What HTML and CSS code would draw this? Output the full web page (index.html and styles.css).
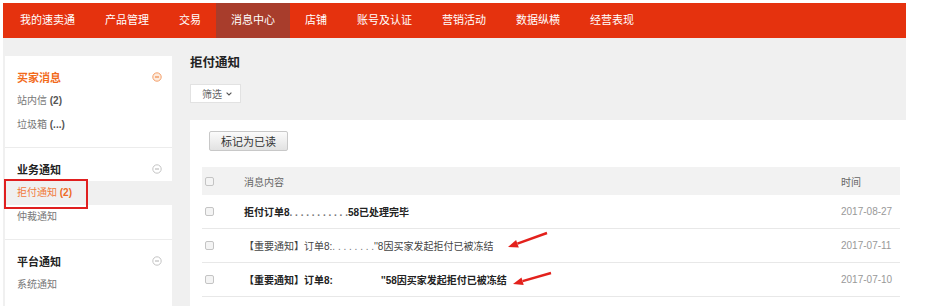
FILE: index.html
```html
<!DOCTYPE html>
<html lang="zh-CN">
<head>
  <meta charset="UTF-8">
  <title>拒付通知 - 消息中心</title>
  <link rel="stylesheet" href="styles.css">
</head>
<body>

<div class="app">
  <!-- top navigation -->
  <div class="topnav">
    <a href="#">我的速卖通</a>
    <a href="#">产品管理</a>
    <a href="#">交易</a>
    <a href="#" class="active">消息中心</a>
    <a href="#">店铺</a>
    <a href="#">账号及认证</a>
    <a href="#">营销活动</a>
    <a href="#">数据纵横</a>
    <a href="#">经营表现</a>
  </div>

  <div class="main">
    <!-- left menu -->
    <div class="sidebar">
      <div class="side-section">
        <div class="side-title orange">
          <span>买家消息</span>
          <svg class="fold-icon" width="10" height="10" viewBox="0 0 10 10"><circle cx="5" cy="5" r="4.2" fill="#fdebdd" stroke="#f3a06b"/><path d="M3 5h4" stroke="#f08a4a" stroke-width="1.2"/></svg>
        </div>
        <div class="side-item">站内信 <b>(2)</b></div>
        <div class="side-item">垃圾箱 <b>(...)</b></div>
      </div>
      <div class="side-section">
        <div class="side-title">
          <span>业务通知</span>
          <svg class="fold-icon" width="10" height="10" viewBox="0 0 10 10"><circle cx="5" cy="5" r="4.2" fill="#fff" stroke="#c4c4c4"/><path d="M3 5h4" stroke="#b0b0b0"/></svg>
        </div>
        <div class="side-item active">拒付通知 <b>(2)</b><span class="mark-box"></span></div>
        <div class="side-item">仲裁通知</div>
      </div>
      <div class="side-section">
        <div class="side-title">
          <span>平台通知</span>
          <svg class="fold-icon" width="10" height="10" viewBox="0 0 10 10"><circle cx="5" cy="5" r="4.2" fill="#fff" stroke="#c4c4c4"/><path d="M3 5h4" stroke="#b0b0b0"/></svg>
        </div>
        <div class="side-item">系统通知</div>
      </div>
    </div>

    <!-- message list -->
    <div class="content">
      <div class="page-title">拒付通知</div>
      <div class="filter">筛选 <svg width="6" height="4" viewBox="0 0 6 4"><path d="M0.6 0.6L3 3L5.4 0.6" fill="none" stroke="#555" stroke-width="1.1"/></svg></div>

      <div class="card">
        <button class="mark-btn">标记为已读</button>

        <div class="table">
          <div class="thead">
            <div class="col-check"><span class="checkbox"></span></div>
            <div class="col-msg">消息内容</div>
            <div class="col-time">时间</div>
          </div>
          <div class="row unread">
            <div class="col-check"><span class="checkbox"></span></div>
            <div class="col-msg">拒付订单8<span class="hidden-no">. . . . . . . . . . .</span>58已处理完毕</div>
            <div class="col-time date">2017-08-27</div>
          </div>
          <div class="row">
            <div class="col-check"><span class="checkbox"></span></div>
            <div class="col-msg">【重要通知】订单8:<span class="hidden-no">. . . . . . . .</span>''8因买家发起拒付已被冻结</div>
            <div class="col-time date">2017-07-11</div>
          </div>
          <div class="row unread">
            <div class="col-check"><span class="checkbox"></span></div>
            <div class="col-msg">【重要通知】订单8:<span class="blank"></span>''58因买家发起拒付已被冻结</div>
            <div class="col-time date">2017-07-10</div>
          </div>
        </div>

        <!-- red arrows drawn over the list -->
        <svg class="arrows" width="60" height="70" viewBox="0 0 60 70">
          <line x1="47" y1="8" x2="17.4" y2="18.6" stroke="#e3211c" stroke-width="2.4"/>
          <polygon points="8,22 18.8,22.4 16.1,14.9" fill="#e3211c"/>
          <line x1="51" y1="48" x2="22.6" y2="56.2" stroke="#e3211c" stroke-width="2.4"/>
          <polygon points="13,59 23.7,60.1 21.5,52.4" fill="#e3211c"/>
        </svg>
      </div>
    </div>
  </div>
</div>

</body>
</html>
```

FILE: styles.css
```css
html, body {
  height: 306px;
  overflow: hidden;
}

body {
  margin: 0;
  padding: 3px 19px 0 3px;
  box-sizing: border-box;
  background: #fff;
  font-family: "Liberation Sans", "Noto Sans CJK SC", sans-serif;
  color: #333;
}

.app {
  width: 903px;
}

/* top bar */
.topnav {
  display: flex;
  height: 35px;
  padding-left: 2px;
  background: #e5320e;
}

.topnav a {
  padding: 0 15px;
  font-size: 11px;
  line-height: 35px;
  color: #fff;
  text-decoration: none;
}

.topnav a.active {
  background: #a83d2c;
}

.main {
  display: flex;
  height: 268px;
  box-sizing: border-box;
  padding: 18px 0 0 2px;
  background: #f0f0f0;
}

/* sidebar */
.sidebar {
  width: 167px;
  flex-shrink: 0;
  background: #fff;
}

.side-section {
  padding: 11px 0 10px;
  border-bottom: 1px solid #ececec;
}

.side-title {
  display: flex;
  justify-content: space-between;
  align-items: center;
  height: 20px;
  margin-bottom: 2px;
  padding: 0 12px 0 12px;
  font-size: 11px;
  font-weight: bold;
  color: #222;
}

.side-title.orange {
  color: #f26a1b;
}

.fold-icon {
  margin-right: -2px;
}

.side-item {
  position: relative;
  height: 24px;
  padding-left: 12px;
  font-size: 10px;
  line-height: 24px;
  color: #777;
}

.side-item b {
  color: #555;
}

.side-item.active {
  background: #f0f0f0;
  color: #f07a3c;
}

.side-item.active b {
  color: #ee6a26;
}

.mark-box {
  position: absolute;
  left: -1px;
  top: -2px;
  width: 84px;
  height: 30px;
  box-sizing: border-box;
  border: 2px solid #e01f1f;
}

/* content */
.content {
  flex: 1;
  display: flex;
  flex-direction: column;
  align-items: flex-start;
  margin-left: 18px;
}

.page-title {
  font-size: 12.5px;
  font-weight: bold;
  line-height: 14px;
  color: #222;
}

.filter {
  display: flex;
  align-items: center;
  gap: 4px;
  width: 51px;
  height: 19px;
  margin-top: 14px;
  padding-left: 11px;
  box-sizing: border-box;
  border: 1px solid #e2e2e2;
  background: #fff;
  font-size: 10px;
  color: #666;
}

.card {
  position: relative;
  align-self: stretch;
  flex: 1;
  margin-top: 17px;
  padding: 11px 6px 0 12px;
  background: #fff;
}

.mark-btn {
  display: block;
  width: 79px;
  height: 20px;
  margin-left: 7px;
  padding: 0;
  border: 1px solid #c8c8c8;
  border-radius: 2px;
  background: linear-gradient(#fbfbfb, #e2e2e2);
  font-family: inherit;
  font-size: 11px;
  color: #333;
}

.table {
  margin-top: 16px;
}

.thead, .row {
  display: flex;
  align-items: center;
  font-size: 10px;
}

.thead {
  height: 28px;
  background: #f2f2f2;
  color: #666;
}

.row {
  height: 33px;
  border-bottom: 1px solid #e8e8e8;
  color: #444;
}

.row.unread .col-msg {
  font-weight: bold;
  color: #222;
}

.col-check {
  width: 42px;
  padding-left: 3px;
  box-sizing: border-box;
}

.col-msg {
  flex: 1;
  white-space: nowrap;
}

.col-time {
  width: 59px;
}

.date {
  color: #999;
}

.checkbox {
  display: block;
  width: 9px;
  height: 9px;
  box-sizing: border-box;
  border: 1px solid #c4c4c4;
  border-radius: 2px;
  background: #f4f4f4;
}

.hidden-no {
  color: #777;
}

.blank {
  display: inline-block;
  width: 48px;
}

.arrows {
  position: absolute;
  left: 310px;
  top: 105px;
}
```
